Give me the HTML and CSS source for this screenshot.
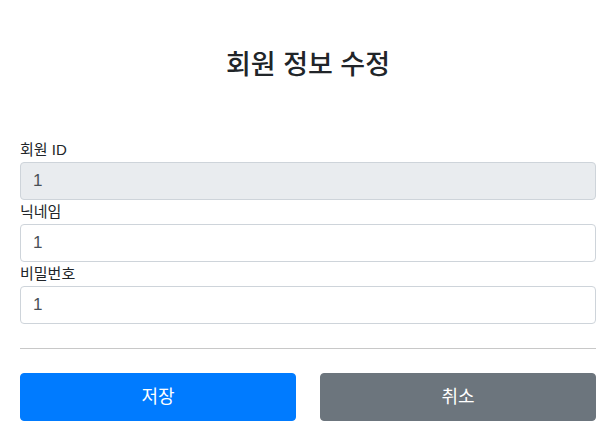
FILE: index.html
```html
<!DOCTYPE html>
<html lang="ko">
<head>
<meta charset="utf-8">
<title>회원 정보 수정</title>
<link rel="stylesheet" href="styles.css">
</head>
<body>
<div class="container">
  <div class="header">
    <h2 class="title">회원 정보 수정</h2>
  </div>
  <form class="form">
    <div class="field">
      <label class="label" for="id">회원 ID</label>
      <input class="input" id="id" type="text" value="1" disabled>
    </div>
    <div class="field">
      <label class="label" for="nick">닉네임</label>
      <input class="input" id="nick" type="text" value="1">
    </div>
    <div class="field">
      <label class="label" for="pw">비밀번호</label>
      <input class="input" id="pw" type="text" value="1">
    </div>
    <hr class="divider">
    <div class="actions">
      <button class="btn btn-primary" type="button">저장</button>
      <button class="btn btn-secondary" type="button">취소</button>
    </div>
  </form>
</div>
</body>
</html>
```
FILE: styles.css
```css
* { box-sizing: border-box; }
html, body { margin: 0; padding: 0; background: #fff; }
body {
  font-family: "Liberation Sans", "Noto Sans CJK KR", sans-serif;
  color: #212529;
  font-size: 16px;
}
.container {
  padding: 0 17px 0 20px;
}
.header {
  padding: 48px 0 48px;
  text-align: center;
}
.title {
  margin: 0 0 8px;
  font-size: 27px;
  line-height: 34px;
  font-weight: 500;
  color: #212529;
}
.form { margin: 0; }
.field { display: flex; flex-direction: column; }
.label {
  font-size: 15px;
  line-height: 24px;
  color: #212529;
}
.input {
  height: 38px;
  width: 100%;
  padding: 6px 12px;
  font-family: "Liberation Sans", "Noto Sans CJK KR", sans-serif;
  font-size: 17px;
  color: #495057;
  background: #fff;
  border: 1px solid #ced4da;
  border-radius: 4px;
  margin: 0;
}
.input:disabled {
  background: #e9ecef;
  color: #495057;
  opacity: 1;
}
.divider {
  margin: 24px 0;
  border: 0;
  border-top: 1px solid #c8c8c8;
  height: 0;
}
.actions {
  display: grid;
  grid-template-columns: 1fr 1fr;
  gap: 24px;
}
.btn {
  height: 48px;
  border: 1px solid transparent;
  border-radius: 4px;
  color: #fff;
  font-family: "Liberation Sans", "Noto Sans CJK KR", sans-serif;
  font-size: 18px;
  line-height: 30px;
  padding: 8px 16px;
}
.btn-primary { background: #007bff; border-color: #007bff; }
.btn-secondary { background: #6c757d; border-color: #6c757d; }
```
